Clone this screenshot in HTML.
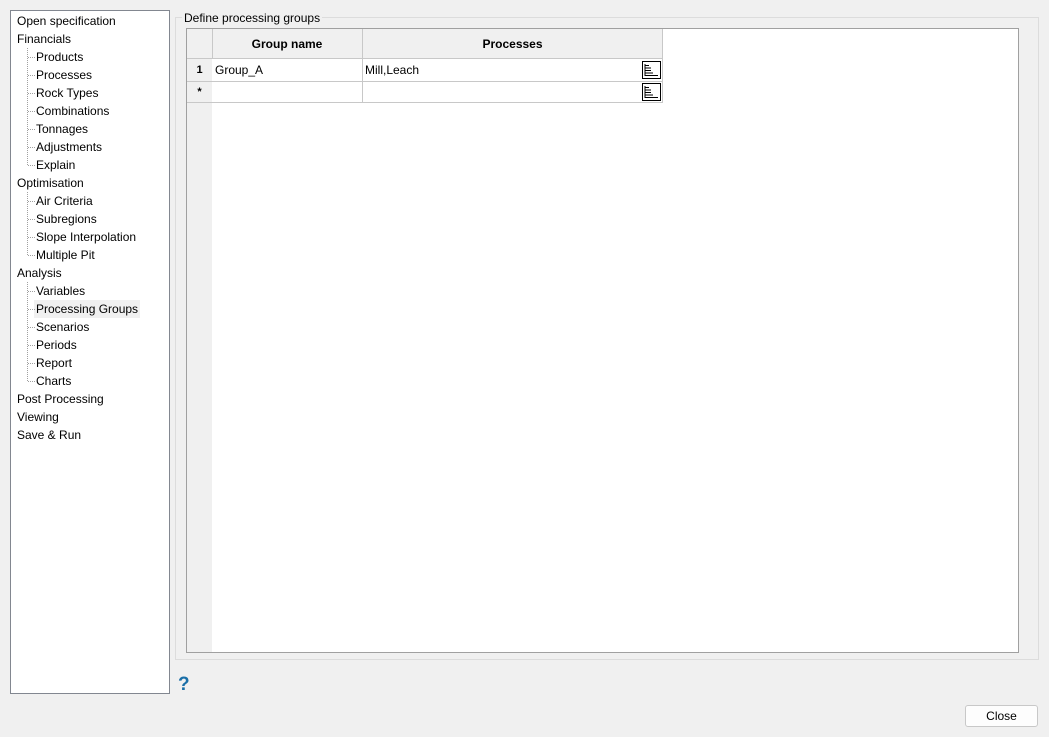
<!DOCTYPE html>
<html><head><style>
body{margin:0;width:1049px;height:737px;background:#f0f0f0;font-family:"Liberation Sans",Arial,sans-serif;font-size:12px;color:#000;position:relative;overflow:hidden}
.abs{position:absolute}
#tree{left:10px;top:10px;width:158px;height:682px;background:#fff;border:1px solid #828790}
.it{position:absolute;white-space:nowrap;line-height:18px}
.l1{left:6px}.l2{left:25px}
.dot{position:absolute;left:16px;border-left:1px dotted #a0a0a0}
.hd{position:absolute;left:17px;width:7px;border-top:1px dotted #a0a0a0}
#grp{left:175px;top:17px;width:862px;height:641px;border:1px solid #dcdcdc}
#grid{left:186px;top:28px;width:831px;height:623px;background:#fff;border:1px solid #a0a0a0}
.c{position:absolute;box-sizing:border-box}
</style></head><body>
<div id="tree" class="abs">
<div class="it l1" style="top:1px">Open specification</div>
<div class="it l1" style="top:19px">Financials</div>
<div class="dot" style="top:37px;height:117px"></div>
<div class="it l2" style="top:37px">Products</div><div class="hd" style="top:46px"></div>
<div class="it l2" style="top:55px">Processes</div><div class="hd" style="top:64px"></div>
<div class="it l2" style="top:73px">Rock Types</div><div class="hd" style="top:82px"></div>
<div class="it l2" style="top:91px">Combinations</div><div class="hd" style="top:100px"></div>
<div class="it l2" style="top:109px">Tonnages</div><div class="hd" style="top:118px"></div>
<div class="it l2" style="top:127px">Adjustments</div><div class="hd" style="top:136px"></div>
<div class="it l2" style="top:145px">Explain</div><div class="hd" style="top:154px"></div>
<div class="it l1" style="top:163px">Optimisation</div>
<div class="dot" style="top:181px;height:63px"></div>
<div class="it l2" style="top:181px">Air Criteria</div><div class="hd" style="top:190px"></div>
<div class="it l2" style="top:199px">Subregions</div><div class="hd" style="top:208px"></div>
<div class="it l2" style="top:217px">Slope Interpolation</div><div class="hd" style="top:226px"></div>
<div class="it l2" style="top:235px">Multiple Pit</div><div class="hd" style="top:244px"></div>
<div class="it l1" style="top:253px">Analysis</div>
<div class="dot" style="top:271px;height:99px"></div>
<div class="it l2" style="top:271px">Variables</div><div class="hd" style="top:280px"></div>
<div class="it l2" style="top:289px;background:#f0f0f0;padding:0 2px;left:23px">Processing Groups</div><div class="hd" style="top:298px"></div>
<div class="it l2" style="top:307px">Scenarios</div><div class="hd" style="top:316px"></div>
<div class="it l2" style="top:325px">Periods</div><div class="hd" style="top:334px"></div>
<div class="it l2" style="top:343px">Report</div><div class="hd" style="top:352px"></div>
<div class="it l2" style="top:361px">Charts</div><div class="hd" style="top:370px"></div>
<div class="it l1" style="top:379px">Post Processing</div>
<div class="it l1" style="top:397px">Viewing</div>
<div class="it l1" style="top:415px">Save &amp; Run</div>
</div>
<div id="grp" class="abs"></div>
<div class="abs" style="left:182px;top:10px;background:#f0f0f0;padding:0 2px;line-height:16px">Define processing groups</div>
<div id="grid" class="abs">
<div class="c" style="left:0;top:0;width:25px;height:623px;background:#f0f0f0"></div>
<div class="c" style="left:0;top:0;width:476px;height:30px;background:#f0f0f0;border-bottom:1px solid #c8c8c8"></div>
<div class="c" style="left:25px;top:0;width:1px;height:30px;background:#c8c8c8"></div>
<div class="c" style="left:175px;top:0;width:1px;height:74px;background:#c8c8c8"></div>
<div class="c" style="left:475px;top:0;width:1px;height:74px;background:#c8c8c8"></div>
<div class="c" style="left:25px;top:0;width:150px;line-height:30px;text-align:center;font-weight:bold">Group name</div>
<div class="c" style="left:176px;top:0;width:299px;line-height:30px;text-align:center;font-weight:bold">Processes</div>
<div class="c" style="left:0;top:52px;width:476px;height:1px;background:#c8c8c8"></div>
<div class="c" style="left:0;top:73px;width:476px;height:1px;background:#c8c8c8"></div>
<div class="c" style="left:0;top:30px;width:25px;height:22px;line-height:22px;text-align:center;font-weight:bold;font-size:11px">1</div>
<div class="c" style="left:0;top:53px;width:25px;height:20px;line-height:20px;text-align:center;font-weight:bold;font-size:11px">*</div>
<div class="c" style="left:28px;top:30px;line-height:22px">Group_A</div>
<div class="c" style="left:178px;top:30px;line-height:22px">Mill,Leach</div>
<svg class="c" style="left:455px;top:32px" width="20" height="18"><rect x="0.5" y="0.5" width="18" height="17" fill="#fff" stroke="#000"/><path d="M3 3v12M3 4.5h4M3 7h6M3 9.5h6M3 12h8M3 14.5h13" stroke="#000"/></svg>
<svg class="c" style="left:455px;top:54px" width="20" height="18"><rect x="0.5" y="0.5" width="18" height="17" fill="#fff" stroke="#000"/><path d="M3 3v12M3 4.5h4M3 7h6M3 9.5h6M3 12h8M3 14.5h13" stroke="#000"/></svg>
</div>
<div class="abs" style="left:178px;top:674px;color:#1a6fa8;font-weight:bold;font-size:19px">?</div>
<div class="abs" style="left:965px;top:705px;width:71px;height:20px;background:#fdfdfd;border:1px solid #c8c8c8;border-radius:3px;text-align:center;line-height:20px">Close</div>
</body></html>
